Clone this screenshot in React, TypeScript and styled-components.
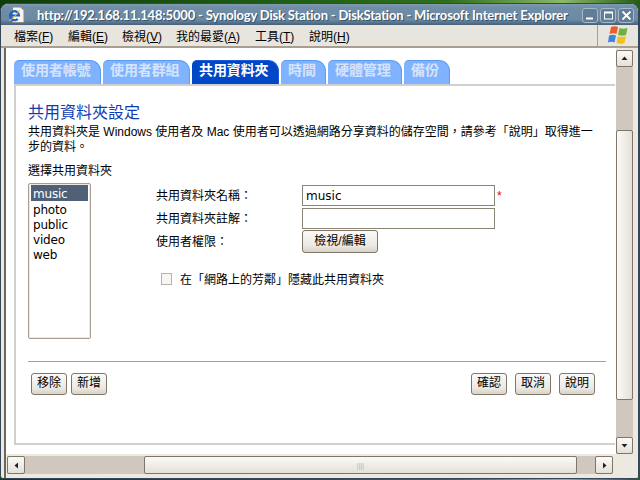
import * as React from 'react';
import styled, { createGlobalStyle } from 'styled-components';

const UI = `"Liberation Sans", "Noto Sans CJK TC", sans-serif`;

const GlobalStyle = createGlobalStyle`
  html, body {
    margin: 0;
    padding: 0;
    background: #1d5a12;
  }
  * {
    box-sizing: border-box;
  }
`;

const Desktop = styled.div`
  width: 640px;
  height: 480px;
  padding: 3px 1px 0 0;
  overflow: hidden;
  background: linear-gradient(90deg, #0f3d0a 0%, #1f5f14 45%, #2f6f1c 70%, #8cb868 88%, #235c16 100%);
`;

const Window = styled.div`
  height: 476px;
  display: flex;
  flex-direction: column;
  background: #ece9e1;
  border: 1px solid #36465a;
  border-radius: 8px 8px 3px 3px;
  overflow: hidden;
`;

const TitleBar = styled.div`
  height: 21px;
  flex: none;
  display: flex;
  align-items: center;
  padding: 1px 4px 0 7px;
  background: linear-gradient(180deg, #7f9ab0 0%, #6f8da6 18%, #6c8aa3 75%, #47607a 100%);
`;

const TitleText = styled.div`
  flex: 1;
  min-width: 0;
  margin-left: 12px;
  font: bold 13px Lato, "DejaVu Sans", sans-serif;
  letter-spacing: -0.17px;
  color: #fff;
  white-space: nowrap;
  overflow: hidden;
  text-shadow: 1px 1px 0 #3c5266;
`;

const CaptionButtons = styled.div`
  flex: none;
  display: flex;
  gap: 2px;
`;

const CaptionButton = styled.div`
  width: 16px;
  height: 15px;
  border: 1px solid #a7b9c8;
  border-radius: 3px;
  background: #5f7d96;
  display: flex;
  align-items: center;
  justify-content: center;
`;

const MenuRow = styled.div`
  height: 23px;
  flex: none;
  display: flex;
  background: #e8e4de;
  border-bottom: 2px solid #a89f92;
`;

const MenuItems = styled.div`
  flex: 1;
  display: flex;
  align-items: center;
  padding: 0 0 1px 13px;
`;

const MenuItem = styled.div<{ $w: number }>`
  width: ${({ $w }) => $w}px;
  font: 12px ${UI};
  color: #000;
  white-space: nowrap;
  u {
    text-decoration: underline;
  }
`;

const FlagBox = styled.div`
  width: 41px;
  flex: none;
  border-left: 1px solid #a89f92;
  display: flex;
  align-items: center;
  justify-content: center;
`;

const Viewport = styled.div`
  flex: 1;
  min-height: 0;
  display: grid;
  grid-template-columns: 610px 17px;
  grid-template-rows: 406px 18px;
  row-gap: 2px;
  margin-left: 3px;
  border-left: 2px solid #6b675e;
  background: #ece9e1;
  align-content: start;
`;

const Page = styled.div`
  background: #fff;
  padding: 12px 1px 9px 8px;
  display: flex;
  flex-direction: column;
  overflow: hidden;
`;

const Tabs = styled.div`
  display: flex;
  gap: 2px;
  height: 24px;
  flex: none;
`;

const Tab = styled.div<{ $w: number; $active?: boolean }>`
  width: ${({ $w }) => $w}px;
  background: ${({ $active }) => ($active ? '#0047c8' : '#80b3ff')};
  border-top: 1px solid ${({ $active }) => ($active ? '#1a5ad8' : '#5a9cf5')};
  border-right: 1px solid ${({ $active }) => ($active ? '#1a5ad8' : '#5a9cf5')};
  border-radius: 5px 11px 0 0;
  color: ${({ $active }) => ($active ? '#fff' : '#d6e4fb')};
  font: bold 14px "Noto Sans CJK TC", sans-serif;
  letter-spacing: -0.1px;
  line-height: 17px;
  padding-left: 7px;
  white-space: nowrap;
`;

const Frame = styled.div`
  flex: 1;
  min-height: 0;
  border: 2px solid #d0d0d0;
  border-right: 0;
  padding: 15px 9px 0 12px;
  display: flex;
  flex-direction: column;
`;

const Heading = styled.div`
  font: 400 16px "Noto Sans CJK TC", sans-serif;
  line-height: 20px;
  color: #0f3cb4;
`;

const Paragraph = styled.div`
  margin-top: 4px;
  width: 574px;
  font: 12px/15px ${UI};
  color: #000;
`;

const SelectLabel = styled.div`
  margin-top: 9px;
  font: 12px/15px ${UI};
  color: #000;
`;

const Chooser = styled.div`
  margin-top: 4px;
  display: flex;
  height: 156px;
`;

const ListBox = styled.div`
  width: 63px;
  flex: none;
  border: 1px solid #a89f92;
  border-radius: 2px;
  padding: 1px 2px;
  box-shadow: inset 0 0 0 1px #ebe8e2;
`;

const ListRow = styled.div<{ $selected?: boolean }>`
  height: 15px;
  padding-left: 2px;
  font: 12px/17px "DejaVu Sans", sans-serif;
  letter-spacing: -0.2px;
  color: ${({ $selected }) => ($selected ? '#fff' : '#000')};
  background: ${({ $selected }) => ($selected ? '#4f6077' : 'transparent')};
  &:first-child {
    height: 16px;
    line-height: 19px;
  }
  &:nth-child(2) {
    margin-top: 1px;
  }
`;

const FormColumn = styled.div`
  margin-left: 65px;
  padding-top: 1px;
  flex: 1;
  display: flex;
  flex-direction: column;
`;

const FieldGrid = styled.div`
  display: grid;
  grid-template-columns: 146px auto;
  grid-auto-rows: 23px;
  align-items: center;
  justify-content: start;
`;

const FieldLabel = styled.div`
  padding-bottom: 2px;
  font: 12px ${UI};
  color: #000;
  white-space: nowrap;
`;

const FieldValue = styled.div`
  display: flex;
  align-items: center;
`;

const TextBox = styled.div`
  width: 193px;
  height: 21px;
  border: 1px solid #8a8474;
  padding-left: 3px;
  font: 12px/20px "DejaVu Sans", sans-serif;
  color: #000;
`;

const Required = styled.span`
  margin-left: 2px;
  color: #e00000;
  font: 12px ${UI};
`;

const Button = styled.div<{ $w?: number; $tall?: boolean }>`
  width: ${({ $w }) => $w ?? 36}px;
  height: ${({ $tall }) => ($tall ? 23 : 22)}px;
  border: 1px solid #7f7668;
  border-radius: 3px;
  background: linear-gradient(180deg, #fbfaf8 0%, #ece9e3 70%, #d8d2c8 100%);
  font: 12px/${({ $tall }) => ($tall ? 21 : 19)}px ${UI};
  color: #000;
  text-align: center;
`;

const CheckRow = styled.div`
  margin-top: 17px;
  margin-left: 5px;
  display: flex;
  align-items: center;
  gap: 8px;
  font: 12px ${UI};
  color: #000;
`;

const CheckBox = styled.div`
  width: 11px;
  height: 12px;
  border: 1px solid #b8b4a8;
  background: #f7f6f2;
`;

const Rule = styled.div`
  margin-top: 22px;
  height: 1px;
  width: 578px;
  background: #a89f92;
  flex: none;
`;

const ButtonRow = styled.div`
  margin-top: 11px;
  width: 564px;
  margin-left: 3px;
  display: flex;
  justify-content: space-between;
`;

const ButtonGroup = styled.div<{ $gap: number }>`
  display: flex;
  gap: ${({ $gap }) => $gap}px;
`;

const VScroll = styled.div`
  margin-top: 2px;
  display: flex;
  flex-direction: column;
  height: 404px;
  background: #d0c8be;
`;

const HScroll = styled.div`
  display: flex;
  align-items: stretch;
  height: 18px;
  margin: 0 3px 0 1px;
  background: #d0c8be;
`;

const ArrowButton = styled.div<{ $wide?: boolean }>`
  flex: none;
  width: ${({ $wide }) => ($wide ? 18 : 17)}px;
  height: ${({ $wide }) => ($wide ? 18 : 17)}px;
  border: 1px solid #7f7668;
  border-radius: 2px;
  background: linear-gradient(180deg, #fbfaf8, #e4e0d8);
  display: flex;
  align-items: center;
  justify-content: center;
`;

const VThumb = styled.div`
  margin-top: 63px;
  height: 270px;
  flex: none;
  border: 1px solid #7f7668;
  border-radius: 2px;
  background: linear-gradient(90deg, #fbfaf8, #e4e0d8);
`;

const VTrackEnd = styled.div`
  flex: 1;
`;

const HThumb = styled.div`
  margin-left: 119px;
  width: 433px;
  flex: none;
  border: 1px solid #7f7668;
  border-radius: 2px;
  background: linear-gradient(180deg, #fbfaf8, #e4e0d8);
  display: flex;
  align-items: center;
  justify-content: center;
  color: #b8b2a6;
  font: 7px ${UI};
`;

const HTrackEnd = styled.div`
  flex: 1;
`;

const IeIcon = () => (
  <svg width="17" height="18" viewBox="0 0 17 18" style={{ flex: 'none' }}>
    <path d="M4.500 1h8l3.500 3.500V16.500H4.500z" fill="#f6f4ec" stroke="#8a8a80" />
    <path d="M2.500 9.500h8.500a4.500 4.500 0 1 0-1.300 3.400" fill="none" stroke="#1a5fd0" strokeWidth="2.200" />
    <path d="M1 14.500c2.500-.5 8-6 10.500-10.500" stroke="#e8c040" strokeWidth="1" fill="none" />
  </svg>
);

const FlagIcon = () => (
  <svg width="21" height="19" viewBox="0 0 21 19">
    <path d="M3 1c2-1 5-1 7 0L8.500 8C6 7 4 7 1.500 8z" fill="#e8602c" />
    <path d="M11.500 2c2 1 5 1 8 0L18 9c-3 1-5 1-8-.2z" fill="#6cb23c" />
    <path d="M1 9.500C3.500 8.500 6 8.500 8 9.500L6.500 16.500C4.500 15.500 2 15.500 0 16.500z" fill="#3c84dc" />
    <path d="M9.800 10.200c2 1 5 1 8-.2L16.500 17c-3 1.500-6 1-8-.2z" fill="#f4c020" />
  </svg>
);

const MinimizeGlyph = () => (
  <svg width="10" height="9" viewBox="0 0 10 9"><path d="M1 7.500h7" stroke="#fff" strokeWidth="2" /></svg>
);
const MaximizeGlyph = () => (
  <svg width="11" height="9" viewBox="0 0 11 9"><rect x="1.500" y="1.500" width="8" height="6.500" fill="none" stroke="#fff" /><path d="M1 1.500h9" stroke="#fff" strokeWidth="2" /></svg>
);
const CloseGlyph = () => (
  <svg width="11" height="11" viewBox="0 0 11 11"><path d="M1.500 1.500l8 8M9.500 1.500l-8 8" stroke="#fff" strokeWidth="1.800" /></svg>
);

const Arrow: React.FC<{ points: string }> = ({ points }) => (
  <svg width="7" height="7" viewBox="0 0 7 7"><polygon points={points} fill="#222" /></svg>
);

const menus = [
  { label: '檔案', key: 'F', w: 54 },
  { label: '編輯', key: 'E', w: 54 },
  { label: '檢視', key: 'V', w: 54 },
  { label: '我的最愛', key: 'A', w: 79 },
  { label: '工具', key: 'T', w: 54 },
  { label: '說明', key: 'H', w: 54 },
];

const tabs = [
  { label: '使用者帳號', w: 87 },
  { label: '使用者群組', w: 87 },
  { label: '共用資料夾', w: 87, active: true },
  { label: '時間', w: 45 },
  { label: '硬體管理', w: 74 },
  { label: '備份', w: 46 },
];

const shares = ['music', 'photo', 'public', 'video', 'web'];

export default function App() {
  return (
    <Desktop>
      <GlobalStyle />
      <Window>
        <TitleBar>
          <IeIcon />
          <TitleText>http://192.168.11.148:5000 - Synology Disk Station - DiskStation - Microsoft Internet Explorer</TitleText>
          <CaptionButtons>
            <CaptionButton><MinimizeGlyph /></CaptionButton>
            <CaptionButton><MaximizeGlyph /></CaptionButton>
            <CaptionButton><CloseGlyph /></CaptionButton>
          </CaptionButtons>
        </TitleBar>
        <MenuRow>
          <MenuItems>
            {menus.map((m) => (
              <MenuItem key={m.key} $w={m.w}>{m.label}(<u>{m.key}</u>)</MenuItem>
            ))}
          </MenuItems>
          <FlagBox><FlagIcon /></FlagBox>
        </MenuRow>
        <Viewport>
          <Page>
            <Tabs>
              {tabs.map((t) => (
                <Tab key={t.label} $w={t.w} $active={t.active}>{t.label}</Tab>
              ))}
            </Tabs>
            <Frame>
              <Heading>共用資料夾設定</Heading>
              <Paragraph>共用資料夾是 Windows 使用者及 Mac 使用者可以透過網路分享資料的儲存空間，請參考「說明」取得進一步的資料。</Paragraph>
              <SelectLabel>選擇共用資料夾</SelectLabel>
              <Chooser>
                <ListBox>
                  {shares.map((s, i) => (
                    <ListRow key={s} $selected={i === 0}>{s}</ListRow>
                  ))}
                </ListBox>
                <FormColumn>
                  <FieldGrid>
                    <FieldLabel>共用資料夾名稱：</FieldLabel>
                    <FieldValue><TextBox>music</TextBox><Required>*</Required></FieldValue>
                    <FieldLabel>共用資料夾註解：</FieldLabel>
                    <FieldValue><TextBox /></FieldValue>
                    <FieldLabel>使用者權限：</FieldLabel>
                    <FieldValue><Button $w={76} $tall>檢視/編輯</Button></FieldValue>
                  </FieldGrid>
                  <CheckRow>
                    <CheckBox />
                    在「網路上的芳鄰」隱藏此共用資料夾
                  </CheckRow>
                </FormColumn>
              </Chooser>
              <Rule />
              <ButtonRow>
                <ButtonGroup $gap={4}>
                  <Button>移除</Button>
                  <Button>新增</Button>
                </ButtonGroup>
                <ButtonGroup $gap={8}>
                  <Button>確認</Button>
                  <Button>取消</Button>
                  <Button>說明</Button>
                </ButtonGroup>
              </ButtonRow>
            </Frame>
          </Page>
          <VScroll>
            <ArrowButton><Arrow points="3.500,1.500 6.500,5 0.500,5" /></ArrowButton>
            <VThumb />
            <VTrackEnd />
            <ArrowButton><Arrow points="0.500,2 6.500,2 3.500,5.500" /></ArrowButton>
          </VScroll>
          <HScroll>
            <ArrowButton $wide><Arrow points="1.500,3.500 5,0.500 5,6.500" /></ArrowButton>
            <HThumb>||||</HThumb>
            <HTrackEnd />
            <ArrowButton $wide><Arrow points="2,0.500 5.500,3.500 2,6.500" /></ArrowButton>
          </HScroll>
        </Viewport>
      </Window>
    </Desktop>
  );
}
